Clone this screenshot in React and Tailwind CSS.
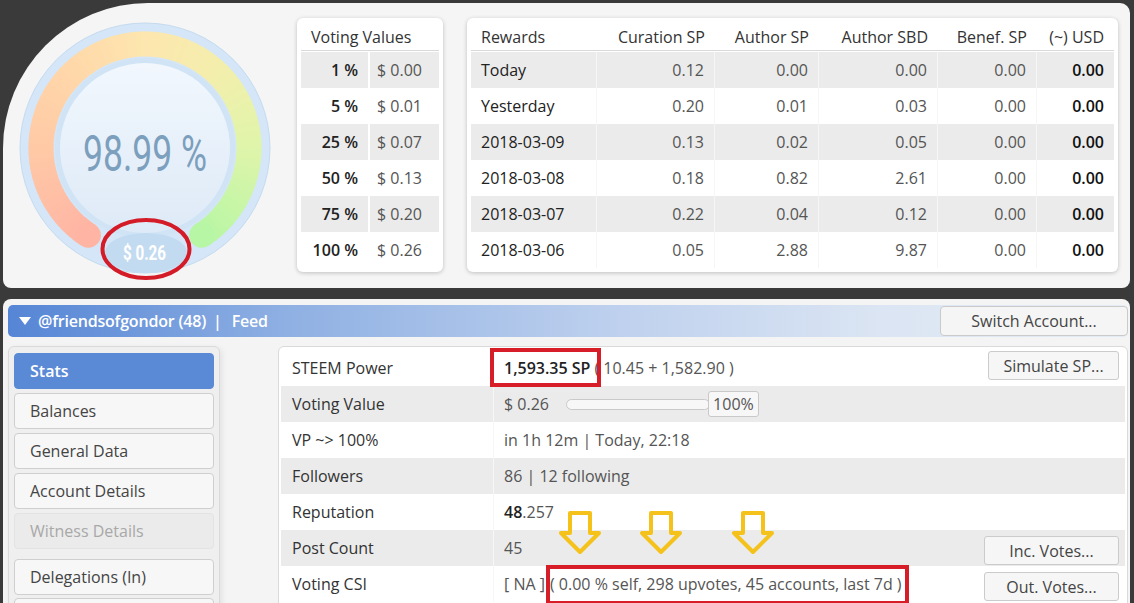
import React from "react";

const stops = [
  [0, [255, 180, 164]],
  [0.18, [255, 200, 166]],
  [0.38, [255, 218, 170]],
  [0.5, [253, 230, 175]],
  [0.64, [244, 238, 172]],
  [0.8, [224, 245, 170]],
  [1, [182, 246, 164]],
];

function colorAt(t) {
  for (let i = 0; i < stops.length - 1; i++) {
    const [t0, c0] = stops[i];
    const [t1, c1] = stops[i + 1];
    if (t >= t0 && t <= t1) {
      const f = (t - t0) / (t1 - t0);
      const c = c0.map((v, k) => Math.round(v + (c1[k] - v) * f));
      return `rgb(${c[0]},${c[1]},${c[2]})`;
    }
  }
  const c = stops[stops.length - 1][1];
  return `rgb(${c[0]},${c[1]},${c[2]})`;
}

function Gauge() {
  const c = 126;
  const r = 104;
  const sw = 25;
  const start = 213;
  const end = 507;
  const N = 120;
  const pt = (deg) => {
    const a = (deg * Math.PI) / 180;
    return [c + r * Math.sin(a), c - r * Math.cos(a)];
  };
  const segs = [];
  for (let i = 0; i < N; i++) {
    const a0 = start + ((end - start) * i) / N;
    const a1 = start + ((end - start) * (i + 1)) / N + 0.6;
    const [x0, y0] = pt(a0);
    const [x1, y1] = pt(Math.min(a1, end));
    segs.push(
      <path
        key={i}
        d={`M${x0} ${y0} A${r} ${r} 0 0 1 ${x1} ${y1}`}
        stroke={colorAt((i + 0.5) / N)}
        strokeWidth={sw}
        fill="none"
      />
    );
  }
  const [sx, sy] = pt(start);
  const [ex, ey] = pt(end);
  return (
    <svg width="252" height="252" viewBox="0 0 252 252" className="overflow-visible block">
      <defs>
        <linearGradient id="inner" x1="0" y1="0" x2="0" y2="1">
          <stop offset="0" stopColor="#f1f7fd" />
          <stop offset="1" stopColor="#deeaf7" />
        </linearGradient>
      </defs>
      <circle cx={c} cy={c} r="125" fill="#d4e6f7" stroke="#c5dbef" strokeWidth="1" />
      {segs}
      <circle cx={sx} cy={sy} r={sw / 2} fill={colorAt(0)} />
      <circle cx={ex} cy={ey} r={sw / 2} fill={colorAt(1)} />
      <circle cx={c} cy={c} r="90" fill="#d0e4f6" />
      <circle cx={c} cy={c} r="85" fill="url(#inner)" />
      <ellipse cx="127" cy="231" rx="41" ry="20" fill="#c3dbf1" />
      <text
        x="64"
        y="149"
        textLength="124"
        lengthAdjust="spacingAndGlyphs"
        fontFamily="Roboto, sans-serif"
        fontSize="50"
        fill="#7c9fbd"
      >
        98.99 %
      </text>
      <text
        x="104"
        y="238"
        textLength="43"
        lengthAdjust="spacingAndGlyphs"
        fontFamily="Roboto, sans-serif"
        fontWeight="700"
        fontSize="21"
        fill="#ffffff"
      >
        $ 0.26
      </text>
      <ellipse cx="127" cy="227" rx="43.5" ry="29" fill="none" stroke="#d41c28" strokeWidth="4" />
    </svg>
  );
}

const vv = [
  ["1 %", "$ 0.00"],
  ["5 %", "$ 0.01"],
  ["25 %", "$ 0.07"],
  ["50 %", "$ 0.13"],
  ["75 %", "$ 0.20"],
  ["100 %", "$ 0.26"],
];

const rewards = [
  ["Today", "0.12", "0.00", "0.00", "0.00", "0.00"],
  ["Yesterday", "0.20", "0.01", "0.03", "0.00", "0.00"],
  ["2018-03-09", "0.13", "0.02", "0.05", "0.00", "0.00"],
  ["2018-03-08", "0.18", "0.82", "2.61", "0.00", "0.00"],
  ["2018-03-07", "0.22", "0.04", "0.12", "0.00", "0.00"],
  ["2018-03-06", "0.05", "2.88", "9.87", "0.00", "0.00"],
];

const colW = ["w-[126px]", "w-[118px]", "w-[104px]", "w-[119px]", "w-[99px]", "w-[77px]"];
const headers = ["Rewards", "Curation SP", "Author SP", "Author SBD", "Benef. SP", "(~) USD"];

function VotingValues() {
  return (
    <div className="ml-[26px] w-[146px] h-[254px] bg-white rounded-[6px] shadow-[0_1px_4px_rgba(0,0,0,0.22)] px-[4px] pt-[5px]">
      <div className="h-[28px] flex items-center pl-[10px] text-[#333] border-b border-[#d8d8d8]">Voting Values</div>
      <div className="pt-[1px]">
        {vv.map(([p, v], i) => (
          <div key={p} className={`flex h-[36px] ${i % 2 === 0 ? "bg-[#ebebeb]" : "bg-white"}`}>
            <div className="w-[69px] flex items-center justify-end pr-[10px] font-semibold text-[#222] border-r-2 border-white">{p}</div>
            <div className="flex-1 flex items-center pl-[7px] text-[#555]">{v}</div>
          </div>
        ))}
      </div>
    </div>
  );
}

function Rewards() {
  return (
    <div className="ml-[24px] w-[651px] h-[254px] bg-white rounded-[6px] shadow-[0_1px_4px_rgba(0,0,0,0.22)] px-[4px] pt-[5px]">
      <div className="flex h-[28px] border-b border-[#d8d8d8] text-[#333]">
        {headers.map((h, k) => (
          <div key={h} className={`${colW[k]} flex items-center px-[10px] ${k === 0 ? "" : "justify-end"}`}>{h}</div>
        ))}
      </div>
      <div className="pt-[1px]">
        {rewards.map((row, i) => (
          <div key={row[0]} className={`flex h-[36px] ${i % 2 === 0 ? "bg-[#ebebeb]" : "bg-white"}`}>
            {row.map((cell, k) => (
              <div
                key={k}
                className={`${colW[k]} flex items-center px-[10px] ${k < 5 ? "border-r border-[#f6f6f6]" : ""} ${
                  k === 0 ? "text-[#222]" : k === 5 ? "justify-end text-[#111] font-semibold" : "justify-end text-[#555]"
                }`}
              >
                {cell}
              </div>
            ))}
          </div>
        ))}
      </div>
    </div>
  );
}

function SideBtn({ children, active, disabled, className = "" }) {
  let cls = "bg-[#f7f7f7] border border-[#cfcfcf] text-[#444]";
  if (active) cls = "bg-[#5a89d6] border border-[#5a89d6] text-white font-semibold";
  if (disabled) cls = "bg-[#ebebeb] border border-[#e3e3e3] text-[#a8a8a8]";
  return (
    <div className={`h-[36px] w-[200px] rounded-[4px] flex items-center pl-[15px] ${cls} ${className}`}>{children}</div>
  );
}

function Btn({ children, className = "" }) {
  return (
    <div className={`h-[29px] rounded-[3px] border border-[#cbcbcb] bg-[#f6f6f6] text-[#444] flex items-center justify-center ${className}`}>
      {children}
    </div>
  );
}

function Arrow({ className }) {
  return (
    <svg width="44" height="44" viewBox="0 0 44 44" className={`absolute ${className}`}>
      <path
        d="M12 2 H32 V22 H41 L22 41 L3 22 H12 Z"
        fill="none"
        stroke="#f4c21a"
        strokeWidth="4"
        strokeLinejoin="round"
      />
    </svg>
  );
}

function StatRow({ label, shade, children, right }) {
  return (
    <div className={`flex h-[36px] ${shade ? "bg-[#ebebeb]" : "bg-white"}`}>
      <div className="w-[213px] flex items-center pl-[11px] text-[#333] border-r border-[#f7f7f7]">{label}</div>
      <div className="flex-1 flex items-center pl-[10px] pr-[6px] text-[#555] relative">
        <div className="flex-1 flex items-center">{children}</div>
        {right}
      </div>
    </div>
  );
}

export default function App() {
  return (
    <div className="w-[1134px] h-[603px] bg-[#3a3a3a] overflow-hidden pt-[3px] pl-[3px] font-['Open_Sans',sans-serif] text-[16px]">
      {/* Top panel */}
      <div className="w-[1127px] h-[285px] bg-[#f5f5f5] rounded-tl-[145px] rounded-tr-[10px] rounded-b-[8px] flex items-start pt-[15px]">
        <div className="ml-[16px] mt-[4px]">
          <Gauge />
        </div>
        <VotingValues />
        <Rewards />
      </div>

      {/* Bottom panel */}
      <div className="mt-[11px] w-[1127px] h-[320px] bg-[#f4f4f4] rounded-t-[8px] pt-[6px] pl-[5px] pr-[2px]">
        <div className="h-[32px] rounded-[5px] bg-[linear-gradient(to_right,#5585d5_0%,#8fb0e3_25%,#bfd1ee_55%,#dbe5f3_78%,#e6ecf5_100%)] flex items-center justify-between">
          <div className="flex items-center text-white font-semibold pl-[10px] tracking-[-0.2px]">
            <svg width="14" height="10" viewBox="0 0 14 10" className="mr-[6px]">
              <path d="M1 1 H13 L7 9 Z" fill="#ffffff" />
            </svg>
            <span>@friendsofgondor (48)</span>
            <span className="ml-[7px] mr-[10px]">|</span>
            <span>Feed</span>
          </div>
          <div className="h-[30px] w-[188px] rounded-[4px] border border-[#cacaca] bg-[#f5f5f5] text-[#444] flex items-center justify-center">
            Switch Account...
          </div>
        </div>

        <div className="mt-[9px] flex items-start">
          {/* Sidebar */}
          <div className="w-[212px] h-[270px] rounded-[6px] border border-[#dadada] bg-[#efefef] shadow-[2px_2px_6px_rgba(0,0,0,0.08)] pt-[6px] pl-[5px]">
            <SideBtn active>Stats</SideBtn>
            <SideBtn className="mt-[4px]">Balances</SideBtn>
            <SideBtn className="mt-[4px]">General Data</SideBtn>
            <SideBtn className="mt-[4px]">Account Details</SideBtn>
            <SideBtn disabled className="mt-[4px]">Witness Details</SideBtn>
            <SideBtn className="mt-[10px]">Delegations (In)</SideBtn>
            <SideBtn className="mt-[3px]" />
          </div>

          {/* Stats table */}
          <div className="ml-[58px] w-[850px] h-[270px] rounded-[6px] border border-[#dadada] bg-white pt-[3px] pl-[2px] pr-[2px] relative">
            <StatRow
              label="STEEM Power"
              right={<Btn className="w-[131px] self-start mt-[1px]">Simulate SP...</Btn>}
            >
              <span className="font-semibold text-[#222]">1,593.35 SP</span>
              <span className="ml-[4px]">( 10.45 + 1,582.90 )</span>
              <div className="absolute left-[-4px] top-[-2px] w-[111px] h-[39px] border-[4px] border-[#d71d28]" />
            </StatRow>
            <StatRow label="Voting Value" shade>
              <span>$ 0.26</span>
              <div className="ml-[17px] w-[144px] h-[11px] rounded-full border border-[#c9c9c9] bg-[#f7f7f7]" />
              <div className="ml-[-2px] h-[26px] w-[51px] rounded-[3px] border border-[#c9c9c9] bg-[#f7f7f7] flex items-center justify-center">
                100%
              </div>
            </StatRow>
            <StatRow label="VP ~> 100%">in 1h 12m | Today, 22:18</StatRow>
            <StatRow label="Followers" shade>86 | 12 following</StatRow>
            <StatRow label="Reputation">
              <span className="font-semibold text-[#222]">48</span>
              <span>.257</span>
            </StatRow>
            <StatRow label="Post Count" shade right={<Btn className="w-[135px] mt-[5px]">Inc. Votes...</Btn>}>
              45
            </StatRow>
            <StatRow label="Voting CSI" right={<Btn className="w-[135px] mt-[5px]">Out. Votes...</Btn>}>
              <span>[ NA ]</span>
              <span className="ml-[5px]">( 0.00 % self, 298 upvotes, 45 accounts, last 7d )</span>
              <div className="absolute left-[52px] top-[-1px] w-[363px] h-[40px] border-[4px] border-[#d71d28]" />
            </StatRow>

            <Arrow className="left-[279px] top-[164px]" />
            <Arrow className="left-[360px] top-[164px]" />
            <Arrow className="left-[452px] top-[164px]" />
          </div>
        </div>
      </div>
    </div>
  );
}
